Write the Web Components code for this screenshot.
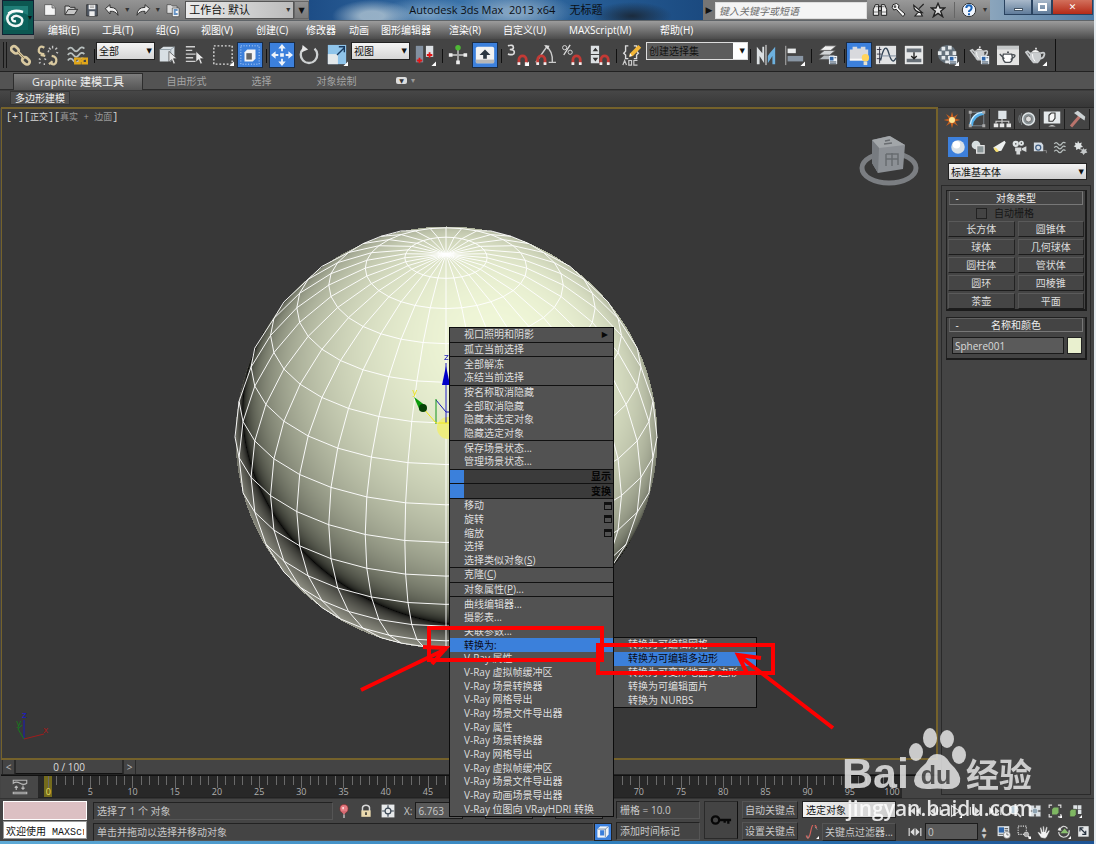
<!DOCTYPE html>
<html lang="zh-CN">
<head>
<meta charset="utf-8">
<title>Autodesk 3ds Max 2013 x64 无标题</title>
<style>
html,body{margin:0;height:100%;background:#444}
body{font:10px/14px "Open Sans","Noto Sans CJK SC",sans-serif;color:#dcdcdc;overflow:hidden}
</style>
</head>
<body>
<mx-app></mx-app>
<script>
const BASE=`*{box-sizing:border-box}button,input,select{font:inherit;color:inherit;margin:0;padding:0;border:0;background:none;border-radius:0;outline:0;min-width:0}
button{display:flex;align-items:center;justify-content:center;white-space:nowrap}a{color:inherit;text-decoration:none}select{appearance:none}`;
function define(name,css,html,ready){
  customElements.define(name,class extends HTMLElement{
    constructor(){super();this.attachShadow({mode:'open'})}
    connectedCallback(){
      const t=document.createElement('template');
      t.innerHTML=`<style>${BASE}${css}</style>`+(typeof html==='function'?html(this):html);
      this.shadowRoot.replaceChildren(t.content.cloneNode(true));
      if(ready)ready(this.shadowRoot,this);
    }
  });
}

/* icons, all on a 24 unit grid */
const magnet='<path d="M13 22v-5a4 4 0 0 1 8 0v5" fill="none" stroke="#c33a35" stroke-width="3"/><path d="M11.500 20h3v3h-3zM19.500 20h3v3h-3z" fill="#eee"/>';
const card='<path d="M13 13h9v9h-9z" fill="#eef3f8"/><path d="M14 14h4v4h-4z" fill="#2d64a8"/><path d="M19 15h2M14 19.500h7M14 21h7" stroke="#456"/>';
const pot='<path d="M6 9h11q2 8-3 12H9Q4 17 6 9z" fill="#c9ccce"/><path d="M7 9q4-5 9 0z" fill="#f2f2f2"/><path d="M11 4h2v2h-2z" fill="#ddd"/><path d="M7 17 1 9l2-1 5 5M17 10q5-2 4 2t-5 4" fill="none" stroke="#c9ccce" stroke-width="2"/><path d="M8 11q0 5 3 8" stroke="#fff" fill="none"/>';
const waves='<path d="M2 6q3-4 6 0t6 0 6-1M2 12q3-4 6 0t6 0 6-1M2 18q3-4 6 0t6 0 6-1" fill="none" stroke="#b9c0bf" stroke-width="2"/>';
const arrow='<path d="M13 8v12l3-3 2 5 2-1-2-5h4z" fill="#e8e8e8" stroke="#333" stroke-width=".7"/>';
const IC={
 logo:'<rect width="24" height="24" fill="#0d625d"/><path d="M0 0h24v9Q12 2 0 16z" fill="#2b8f87" opacity=".6"/><path d="M19 6Q9 3 5 8t1 10q6 4 11 0 3-5-1-7-5-3-8 1 0 4 4 3" fill="none" stroke="#f2f7f6" stroke-width="2.500"/><path d="M4 7q6-4 15-1" stroke="#fff" stroke-width="1.500" fill="none"/>',
 file:'<path d="M4 4h11l5 5v11H4z" fill="#f4f4f4" stroke="#444"/><path d="M15 4v5h5" fill="#bbb" stroke="#444"/>',
 open:'<path d="M3 19V6h6l2 2h7v3" fill="#ddd" stroke="#333" stroke-width="1.500"/><path d="M3 19 8 11h14l-5 8z" fill="#c8c8c8" stroke="#333" stroke-width="1.500"/>',
 save:'<path d="M4 4h16v17H4z" fill="#525a66" stroke="#222"/><path d="M7 4h10v7H7zM8 14h8v7H8z" fill="#eee"/><path d="M9 6h6M9 8h6" stroke="#888"/>',
 undo:'<path d="M2 10 9 4v4q12 0 12 12-4-7-12-6v4z" fill="#ededed" stroke="#333" stroke-width="1.500"/>',
 redo:'<path d="M22 10 15 4v4Q3 8 3 20q4-7 12-6v4z" fill="#ededed" stroke="#333" stroke-width="1.500"/>',
 project:'<path d="M3 8V4h6l2 2h7v11H3z" fill="#ddd" stroke="#444"/><path d="M11 9h10v13H11z" fill="#f8f8f8" stroke="#444"/><path d="M13 12h6M13 15h3M13 18h6" stroke="#3773b4" stroke-width="2"/>',
 bino:'<path d="M5 4h5v16H2v-9zM14 4h5l3 7v9h-8zM10 7h4v6h-4z" fill="#eee" stroke="#222" stroke-width="1.500"/><path d="M3 15h6M15 15h6M5 7h4M15 7h4" stroke="#444"/>',
 wrench:'<path d="M3 4q6-4 9 1l-1 4 10 9-3 4-10-11-4 1Q0 8 3 4z" fill="#f3f3f3" stroke="#222" stroke-width="1.500"/><circle cx="6" cy="7" r="2" fill="#555"/>',
 dish:'<path d="M4 5q0 11 13 11zM11 15l-5 6h11l-3-6M12 10l7-7" fill="#eee" stroke="#222" stroke-width="1.700"/>',
 star:'<path d="m12 2 3 7h7l-6 5 3 8-7-5-7 5 3-8-6-5h7z" fill="#ddd" stroke="#222" stroke-width="2"/>',
 help:'<circle cx="12" cy="12" r="10" fill="#f2f7ff" stroke="#333" stroke-width="1.500"/><path d="M8 9q0-4 4-4t4 4q0 2-4 5v1" fill="none" stroke="#1c62b5" stroke-width="3"/><path d="M10.500 17h3v3h-3z" fill="#1c62b5"/>',
 link:'<g fill="none" stroke="#d9c9a0" stroke-width="3"><rect x="1" y="3" width="9" height="6" rx="3" transform="rotate(42 5 6)"/><rect x="13" y="15" width="9" height="6" rx="3" transform="rotate(42 17 18)"/><path d="m8 8 8 8"/></g><path d="m8 8 8 8" stroke="#8b7a54"/>',
 unlink:'<g fill="none" stroke="#d9c9a0" stroke-width="2.500"><path d="M8 4Q3 1 2 6t6 5M15 21q5 3 6-2t-5-6M13 22l4-3M4 12l5 1"/></g><path d="m13 4 2 2m2-4v3m5-1-2 2m1 3 2 1M2 16l2 1m-2 4 2-1m4 3v-2m2-4-2-1m5-9-1 2" stroke="#c6c6c6" stroke-width="1.500"/>',
 bind:waves+'<path d="M10 16h5v5h-5zM18 16h5v5h-5zM14 18.500h5" fill="none" stroke="#e0a61a" stroke-width="2.500"/>',
 select:'<path d="M3 6l4-3h12v12l-4 4H3z" fill="#d8dfe4"/><path d="M3 6h12v13M15 6l4-3" stroke="#8f9ca5" fill="none"/>'+arrow,
 byname:'<path d="M2 3h10M2 7h7M2 11h12M2 15h8M2 19h11" stroke="#cfcfcf" stroke-width="1.500"/>'+arrow,
 marquee:'<path d="M2 2h20v20H2z" fill="none" stroke="#ddd" stroke-width="1.500" stroke-dasharray="2 2"/>',
 window:'<path d="M2 2h20v20H2z" fill="none" stroke="#d8e6ff" stroke-dasharray="1 2"/><path d="M6 9l3-3h9v10l-3 3H6z" fill="#f4f4f4"/><path d="M8 10h6v7H8z" fill="#666"/>',
 move:'<path d="M10 10h4v4h-4zM12 0l4 5h-3v3h-2V5H8zM12 24l4-5h-3v-3h-2v3H8zM0 12l5-4v3h3v2H5v3zM24 12l-5-4v3h-3v2h3v3z" fill="#eef3fa"/>',
 rotate:'<path d="M6 5a9 9 0 1 0 12 0" fill="none" stroke="#ced1d2" stroke-width="2.500"/><path d="m5 1 6 5-7 3z" fill="#e5e5e5"/>',
 scale:'<path d="M2 1h20v21H2z" fill="#8fc4ea"/><path d="M2 11h11v11H2z" fill="#e3e8ea"/><path d="m12 12 8-8m0 5V3h-6" stroke="#183a60" stroke-width="1.500" fill="none"/>',
 pivot:'<path d="M2 2h8v18H2z" fill="#8290a0"/><path d="M13 2h8v12h-8z" fill="#dde1e5"/><path d="M6 15v6M3 18h6M17 9v6M14 12h6" stroke="#e01616" stroke-width="2"/>',
 manip:'<path d="M12 4v16M4 12h16" stroke="#aaa" stroke-width="2"/><g fill="#eee"><path d="M2 10h4v4H2zM18 10h4v4h-4zM10 18h4v4h-4z"/></g><circle cx="12" cy="4" r="3" fill="#4fb836"/>',
 keys:'<rect x="2" y="3" width="20" height="18" rx="2" fill="#f2f2f2"/><path d="M2 17h20v4H2z" fill="#b7b7b7"/><path d="M12 6l6 6h-4v4h-4v-4H6z" fill="#2d3742"/>',
 snap:'<path d="M1 2q6-2 6 2 0 2-4 2 5 0 5 3 0 4-7 2" fill="none" stroke="#ddd" stroke-width="1.800"/>'+magnet,
 angle:'<path d="M2 20 14 3M13 2q8 6 7 18M16 20h8m-9-4" fill="none" stroke="#ccc" stroke-width="1.500"/><path d="m11 1 6 1-2 4z" fill="#ddd"/><g transform="translate(-9)">'+magnet+'</g>',
 percent:'<path d="m3 12 7-11" stroke="#ddd" stroke-width="1.500"/><circle cx="4" cy="4" r="2.300" fill="none" stroke="#ddd"/><circle cx="10" cy="9" r="2.300" fill="none" stroke="#ddd"/>'+magnet,
 spin:'<path d="M2 2h9v9H2zM2 12h9v9H2z" fill="#dce0e3"/><path d="m4 8 3-4 3 4zM4 15h6l-3 4z" fill="#333"/>'+magnet,
 sets:'<path d="M8 2H5v6l-2 2 2 2v4h3M14 2h3v6l2 2-2 2v4h-3" fill="none" stroke="#ddd" stroke-width="1.500"/><path d="m9 14 1-4 9-9 3 3-9 9z" fill="#f2b638"/><path d="m9 14 1-4 2 3z" fill="#fff"/><path d="m2 23 2-5 2 5m2.500-5v5h3v-5zm9.500 0h-4v5h4" stroke="#ccc" fill="none" stroke-width="1.300"/>',
 mirror:'<path d="M2 3 8 10V3h2v18L5 13v9H2z" fill="#dce0e2"/><path d="M22 3l-6 7-2 3v8l5-8v9h3z" fill="#6db1df"/><path d="M12 1v22" stroke="#fff"/>',
 align:'<path d="M3 2v21" stroke="#bbb"/><path d="M5 5h9v5H5z" fill="#e9ebec"/><path d="M5 13h17v6H5z" fill="#8996a4"/>',
 layers:'<g stroke="#555" stroke-width=".8"><path d="m2 17 6-5h12l-6 5z" fill="#b7bcc0"/><path d="m2 12 6-5h12l-6 5z" fill="#d2d5d7"/><path d="m3 7 6-5h12l-6 5z" fill="#f1f1f1"/></g>'+card,
 ribbon:'<path d="M2 6h3V3h5v2h4V3h5v3h3v12H2z" fill="#d8d9dd"/><path d="M2 16h20v2H2z" fill="#f8f8f8"/><circle cx="19" cy="15" r="4" fill="#ffd45c"/><path d="M17 19h4v4h-4z" fill="#e8e2d0"/>',
 curve:'<path d="M1 2h22v20H1z" fill="#e2e3e4"/><path d="M5 3v18M2 6h5M2 11h5M2 16h5" stroke="#334"/><path d="M6 18Q11-4 15 10t8 5" fill="none" stroke="#345" stroke-width="1.500"/><path d="M5 13h18" stroke="#789"/>',
 schem:'<path d="M2 2h20v20H2z" fill="#e7e8e8"/><path d="M4 5h16v4H4zM4 16h16v4H4z" fill="#687078"/><path d="M12 9v6m-3-2 3 3 3-3" stroke="#222" stroke-width="1.500" fill="none"/>',
 material:'<circle cx="11" cy="11" r="10" fill="#66727c"/><path d="M5 3h4v4H5zM12 2h4v4h-4zM1 8h4v4H1zM9 8h4v4H9zM17 8h4v4h-4zM5 13h4v4H5zM12 13h4v4h-4zM9 18h4v3H9z" fill="#e6eaec"/>'+card,
 setup:'<g transform="translate(1 -1) scale(.9)">'+pot+'</g>'+card,
 frame:'<path d="M0 2h24v21H0z" fill="#e4e4e3"/><path d="M0 2h24v4H0z" fill="#c4c7c8"/><path d="M7 11h9q2 7-2 9H9q-4-3-2-9zM8 16l-5-5m13 1q5-1 3 2l-4 3M11 9h2" fill="#fff" stroke="#4a4f54" stroke-width="1.500"/>',
 teapot:pot,
 create:'<path d="m12 1 2 7 6-4-4 6 7 2-7 2 4 6-6-4-2 7-2-7-6 4 4-6-7-2 7-2-4-6 6 4z" fill="#c9601f"/><circle cx="12" cy="12" r="4" fill="#ffe794"/>',
 modify:'<path d="M3 3h18v18H3z" fill="none" stroke="#8b98a3"/><path d="M4 21Q6 6 21 4" stroke="#53aee9" stroke-width="5" fill="none"/><path d="M3 20Q5 4 20 3" stroke="#d5efff" stroke-width="1.500" fill="none"/><path d="M1 19h4v4H1zM1 1h4v4H1zM19 1h4v4h-4zM19 19h4v4h-4z" fill="#aaa"/>',
 tree:'<path d="M7 1h11v11H7z" fill="#dde3e7"/><path d="M12 12v6M4 18v-3h17v3" stroke="#ccc" fill="none" stroke-width="1.500"/><path d="M1 18h6v5H1zM9 18h6v5H9zM18 18h6v5h-6z" fill="#e8e8e8"/>',
 motion:'<circle cx="14" cy="12" r="8" fill="#8b9498" stroke="#dfe5e7" stroke-width="2"/><circle cx="14" cy="12" r="4" fill="#ddd" stroke="#555"/><path d="M5 4q-4 8 0 16M2 7q-2 5 0 10" stroke="#82898c" fill="none"/>',
 display:'<path d="M1 2h22v16H1z" fill="#e6eaec"/><path d="M8 7l3-3h5v7l-3 4H8z" fill="#f7f7f7" stroke="#333" stroke-width="1.500"/><path d="M7 22q5-4 10 0z" fill="#ccc"/>',
 hammer:'<path d="M4 22 16 8" stroke="#ba746c" stroke-width="4"/><path d="m8 4 5-3 4 3 6 5-1 5-3-2-7-5z" fill="#ccd2d4"/>',
 sphere:'<circle cx="12" cy="12" r="9" fill="#d9e1e6"/><circle cx="10" cy="9" r="5" fill="#fff"/>',
 shapes:'<circle cx="8" cy="8" r="7" fill="#d6dee0"/><path d="M9 9h12v12H9z" fill="#8b9698" stroke="#e5e5e5" stroke-width="2"/>',
 lamp:'<path d="m20 1 2 3-7 13Q4 19 2 12z" fill="#edf0f0"/><path d="M3 12q4-1 8 6-6 4-8-6z" fill="#f7df70"/>',
 camera:'<circle cx="6" cy="6" r="5" fill="#dfe4e5"/><circle cx="15" cy="5" r="4" fill="#dfe4e5"/><path d="M5 12h10v6H5zM16 13l7-3v9l-7-3M7 18v5h6v-5" fill="#d6d9da"/><path d="M5 6h2m7-1h2" stroke="#333" stroke-width="2"/>',
 tape:'<path d="M3 18V4h12l3 4v10z" fill="#d4dce4"/><circle cx="10" cy="12" r="4" fill="none" stroke="#425f83" stroke-width="2"/><path d="M18 17h5v4" stroke="#aaa" fill="none"/>',
 space:waves,
 gears:'<path d="m8 1 2 4 4-1-1 4 3 3-4 1v4l-3-2-4 2v-4l-4-2 3-2-1-4 4 1z" fill="#dfe3e4"/><path d="m17 12 1 3 4-1-1 3 2 3-4 1-2 3-2-3-4-1 3-2-1-4 3 1z" fill="#c5c9ca"/>',
 trackmode:'<path d="M3 3h18v4q-4 3-9 0T3 7zM3 19h18v2H3z" fill="none" stroke="#b7b7b7" stroke-width="1.500"/><path d="M7 16v-5m-2 2 2-2 2 2M16 10v5m-2-2 2 2 2-2" stroke="#bbb" fill="none" stroke-width="1.500"/>',
 pin:'<ellipse cx="12" cy="8" rx="7" ry="7" fill="#e37b82" stroke="#822"/><path d="M7 12l5 7 5-7z" fill="#d56a72"/><path d="M12 18v6" stroke="#ddd" stroke-width="2"/><path d="M9 5h3v4H9z" fill="#ffd3d5"/>',
 lock:'<path d="M6 12V6q1-4 6-4t6 4v6" fill="none" stroke="#d8d8d8" stroke-width="2.500"/><path d="M4 11h16v11H4z" fill="#ead9ae"/><path d="M12 14v5" stroke="#222" stroke-width="2.500"/>',
 xform:'<path d="M1 1h22v22H1z" fill="#e8eaeb"/><circle cx="12" cy="12" r="5" fill="none" stroke="#3b4754" stroke-width="2"/><path d="M12 2v5M12 17v5M2 12h5M17 12h5" stroke="#3b4754" stroke-width="2"/>',
 cube:'<path d="M3 7l4-4h14v13l-4 5H3z" fill="#eef2f7" stroke="#fff"/><path d="M7 9h7v9H7z" fill="#3a7edb"/><path d="M3 7h13v14M16 7l5-4" stroke="#30506f" fill="none"/>',
 key:'<circle cx="6" cy="12" r="4" fill="none" stroke="#080808" stroke-width="2.500"/><path d="M10 12h13m-3 0v4m-4-4v3" stroke="#080808" stroke-width="2.500"/>',
 tangent:'<path d="M2 18Q6 30 10 10T20 5" fill="none" stroke="#d3625c" stroke-width="2"/><path d="M5 18v5m12-20 4 5" stroke="#b9b9b9"/>',
 first:'<path d="M2 5v14" stroke="#ddd" stroke-width="2"/><path d="m12 5-8 7 8 7zM22 5l-8 7 8 7z" fill="#ddd"/>',
 prev:'<path d="m12 5-8 7 8 7zM15 5h2v14h-2zM20 5h2v14h-2z" fill="#ddd"/>',
 play:'<path d="m6 3 14 9-14 9z" fill="none" stroke="#ddd" stroke-width="2"/>',
 next:'<path d="m12 5 8 7-8 7zM3 5h2v14H3zM8 5h2v14H8z" fill="#ddd"/>',
 last:'<path d="M22 5v14" stroke="#ddd" stroke-width="2"/><path d="m12 5 8 7-8 7zM2 5l8 7-8 7z" fill="#ddd"/>',
 keymode:'<path d="M2 5v14M22 5v14" stroke="#ddd" stroke-width="2"/><path d="m11 5-7 7 7 7zM13 5l7 7-7 7z" fill="#ddd"/>',
 zoomi:'<circle cx="10" cy="10" r="7" fill="#b9cbd6" stroke="#eee" stroke-width="2"/><path d="m15 15 7 7" stroke="#ddd" stroke-width="3"/>',
 quad:'<path d="M2 2h9v9H2zM13 2h9v9h-9zM2 13h9v9H2zM13 13h9v9h-9z" fill="#dbe0e4" stroke="#555"/><circle cx="12" cy="12" r="5" fill="#90a5b4" stroke="#fff"/>',
 extent:'<path d="M2 7V2h5M17 2h5v5M22 17v5h-5M7 22H2v-5" stroke="#ddd" fill="none" stroke-width="2"/><path d="M7 9l3-3h8v9l-3 3H7z" fill="#7fb763"/>',
 extall:'<path d="M9 2h7v7H9zM17 2h6v7h-6zM17 10h6v7h-6z" fill="#dde2e5"/><path d="M3 12l3-3h8v9l-3 4H3z" fill="#7fb763" stroke="#333"/>',
 timecfg:'<path d="M1 2h20v17H1z" fill="#dfe5e9"/><path d="M3 4h9v9H3z" fill="#2d64a8"/><path d="M13 6h6M13 9h6M3 16h8" stroke="#555" stroke-width="1.500"/><circle cx="17" cy="17" r="6" fill="#f5f5f5" stroke="#555"/><path d="M17 13v4h3" stroke="#222" fill="none"/>',
 region:'<path d="M2 2h14v14H2z" fill="none" stroke="#ddd" stroke-width="2" stroke-dasharray="2 2"/><circle cx="16" cy="16" r="4" fill="#aaa" stroke="#eee"/><path d="m19 19 4 4" stroke="#eee" stroke-width="3"/>',
 hand:'<path d="M7 22 1 13l2-1 4 3L5 5l2-1 3 8V2h2l1 10 3-9 2 1-2 10 4-5 2 1-5 10-3 3z" fill="#f3f3f3" stroke="#555" stroke-width=".7"/>',
 orbit:'<path d="M4 9Q10-3 18 6M21 9q0 12-10 12-8-2-8-9" fill="none" stroke="#ddd" stroke-width="2"/><path d="M6 14h14l-7-8z" fill="#8abf70"/><path d="m1 9 7 1-4-6z" fill="#eee"/>',
 maxvp:'<path d="M2 2h18v18H2z" fill="#e6e8e9"/><path d="m6 6 9 9m0-5v6H9M5 11V5h6" stroke="#2a3440" stroke-width="2" fill="none"/>'
};
define('mx-icon',':host{display:inline-block;width:22px;height:22px;flex:none}svg{display:block;width:100%;height:100%}',
 e=>`<svg viewBox="0 0 24 24" aria-hidden="true">${IC[e.getAttribute('name')]}${e.hasAttribute('fly')?'<path d="M24 19v5h-5z" fill="#fff"/>':''}</svg>`);

define('mx-titlebar',`:host{display:flex;height:21px;flex:none;background:#1c4c84;border-bottom:1px solid #5f6468}
.q{display:flex;align-items:center;width:275px;padding:0 0 0 6px;background:linear-gradient(#949494,#777);flex:none}
.q button{width:21px}.q mx-icon,.r mx-icon{width:16px;height:16px}.q i,.r i{width:10px;font:8px/12px "DejaVu Sans";color:#333;text-align:center}
select{width:109px;height:18px;margin-left:2px;padding:0 3px;font-size:11px;background:linear-gradient(90deg,#ebebeb,#bbb);color:#111;border:1px solid #555}
.pick{display:flex;align-items:center;position:relative}.pick i{position:absolute;right:1px}
.q .more{width:15px;height:18px;color:#111;font:8px "DejaVu Sans";border:1px solid #666}
h1{flex:1;min-width:0;margin:0;font-size:11px;line-height:20px;font-weight:400;color:#0b0f14;text-align:center;white-space:pre;
background:radial-gradient(40px 16px at 16% 80%,#b0c4d2cc 30%,#0000),radial-gradient(60px 20px at 52% 60%,#8dabc6dd 20%,#0000),radial-gradient(50px 16px at 30% 70%,#8fb2cfcc,#0000),radial-gradient(40px 14px at 82% 80%,#1b2b3d,#0000),linear-gradient(90deg,#1d4d86,#3a73aa 40%,#245a92 75%,#1b4a80)}
.s{display:flex;width:164px;flex:none;background:#757575;color:#111}.s button{width:12px;font:9px "DejaVu Sans"}
input{flex:1;height:17px;margin-top:2px;padding:0 3px;background:#f4f4f4;border:1px solid #ddd;font-style:italic;color:#555}input::placeholder{color:#6d6d6d;opacity:1}
.r{display:flex;align-items:center;width:123px;padding-left:3px;background:linear-gradient(#999,#777);flex:none}.r button{width:20px}.r b{width:1px;height:16px;background:#666;margin:0 4px 0 6px}.r i{margin-left:2px}
.w{display:flex;width:104px;padding-left:14px;background:linear-gradient(90deg,#8ba5bc,#4f7ba5);flex:none;align-items:flex-start}
.w button{height:15px;width:28px;border:1px solid #29425f;border-top:0;background:linear-gradient(#a9b9ca,#5f7b9a);color:#fff;font:bold 9px "DejaVu Sans";flex:none}
.w button:nth-child(2){width:20px}.w button:last-child{width:41px;background:linear-gradient(#d2705c,#b52a17)}.w span{width:9px;height:3px;background:#fff;border:1px solid #456;margin-top:4px}.w em{width:9px;height:8px;border:2px solid #fff}`,
`<div class="q"><button aria-label="新建"><mx-icon name="file"></mx-icon></button><button aria-label="打开"><mx-icon name="open"></mx-icon></button><button aria-label="保存"><mx-icon name="save"></mx-icon></button><button aria-label="撤消"><mx-icon name="undo"></mx-icon></button><i>▾</i><button aria-label="重做"><mx-icon name="redo"></mx-icon></button><i>▾</i><button aria-label="项目文件夹"><mx-icon name="project"></mx-icon></button><label class="pick"><select aria-label="工作台"><option>工作台: 默认</option></select><i>▾</i></label><button class="more" aria-label="更多">▼</button></div>
<h1>Autodesk 3ds Max  2013 x64     无标题</h1>
<div class="s"><button aria-label="展开">▶</button><input aria-label="搜索" placeholder="键入关键字或短语"></div>
<div class="r"><button aria-label="查找"><mx-icon name="bino"></mx-icon></button><button aria-label="工具"><mx-icon name="wrench"></mx-icon></button><button aria-label="通信"><mx-icon name="dish"></mx-icon></button><button aria-label="收藏"><mx-icon name="star"></mx-icon></button><b></b><button aria-label="帮助"><mx-icon name="help"></mx-icon></button><i>▾</i></div>
<div class="w"><button aria-label="最小化"><span></span></button><button aria-label="还原"><em></em></button><button aria-label="关闭">✕</button></div>`);

const MENUS=['编辑(E)','工具(T)','组(G)','视图(V)','创建(C)','修改器','动画','图形编辑器','渲染(R)','自定义(U)','MAXScript(M)','帮助(H)'];
define('mx-menubar',`:host{display:block;height:18px;flex:none;background:linear-gradient(#9c9c9c,#4b4b4b)}
nav{display:grid;grid-template-columns:54px 54px 45px 55px 50px 43px 32px 68px 54px 66px 91px auto;padding-left:14px;line-height:18px;color:#fff;white-space:nowrap}`,
`<nav>${MENUS.map(m=>`<a href="#">${m}</a>`).join('')}</nav>`);

define('mx-head',`:host{display:flex;flex:none;padding-left:2px;background:#777}.l{display:flex;align-items:center;width:32px;height:35px;padding:0;background:#0c5751;border:1px solid #123}.l mx-icon{width:24px;height:28px}.l span{font:8px "DejaVu Sans";color:#111}div{flex:1;min-width:0}`,
`<button class="l" aria-label="应用程序菜单"><mx-icon name="logo"></mx-icon><span>▾</span></button><div><mx-titlebar></mx-titlebar><mx-menubar></mx-menubar></div>`);

const B=(n,w,l,f)=>`<button class="w${w}${l?' lit':''}" aria-label="${n}"><mx-icon name="${n}"${f?' fly':''}></mx-icon></button>`;
const S=w=>`<i class="s${w}"></i>`;
const C=(t,c)=>`<label class="c ${c||''}"><select aria-label="${t}"><option>${t}</option></select><b>▼</b></label>`;
define('mx-toolbar',`:host{display:flex;height:33px;flex:none;background:#444;border-bottom:1px solid #222;overflow:hidden}
.g{width:8px;margin:3px 0;flex:none;background:linear-gradient(90deg,#444 3px,#181818 3px,#181818 4px,#444 4px,#444 6px,#181818 6px,#181818 7px,#444 7px)}
button{height:26px;margin-top:3px;flex:none}.w26{width:26px}.w28{width:28px}.w30{width:30px}.lit{background:#3c80dc;border:1px solid #1b2c44}
i{flex:none;height:14px;margin-top:10px;background:linear-gradient(#111,#111) center/1px no-repeat}.s4{width:4px}.s6{width:6px}
.c{display:flex;position:relative;width:59px;height:18px;margin-top:3px;flex:none;color:#111}.c select{width:100%;padding:0 2px;border:1px solid #222;background:linear-gradient(#f4f4f4,#d6d6d6)}.c b{position:absolute;right:3px;top:3px;font:7px/12px "DejaVu Sans"}
.n{width:102px}.n select{background:linear-gradient(90deg,#5c5c5c 86px,#fff 86px);border-color:#ddd}
.e{width:1px;background:#111;margin-left:5px}`,
`<div class="g"></div>`+B('link',26)+B('unlink',28)+B('bind',30)+S(4)+C('全部')+B('select',26)+B('byname',28)+B('marquee',28,0,1)+B('window',26,1)+S(6)+B('move',26,1)+B('rotate',28)+B('scale',28,0,1)+C('视图')+B('pivot',30,0,1)+S(4)+B('manip',28)+B('keys',26,1)+S(6)+B('snap',28,0,1)+B('angle',26)+B('percent',28)+B('spin',28)+S(4)+B('sets',28)+C('创建选择集','n')+S(4)+B('mirror',28)+B('align',28,0,1)+S(6)+B('layers',28)+S(4)+B('ribbon',26,1)+B('curve',28)+B('schem',28)+S(6)+B('material',28,0,1)+S(4)+B('setup',28)+B('frame',28)+B('teapot',28,0,1)+'<div class="e"></div>');

define('mx-ribbon',`:host{display:block;flex:none;height:35px;background:#3c3c3c}
nav{display:flex;height:18px;padding-left:13px;background:#535353;border-bottom:1px solid #2b2b2b;color:#a5a5a5;line-height:18px}
nav a{width:76px;text-align:center;font-size:10px}nav a:first-child{width:130px;height:17px;margin-top:1px;line-height:16px;background:linear-gradient(#7d7d7d,#555);color:#eee;font-size:11px;border:1px solid #2d2d2d;border-width:1px 1px 0}
nav a.b{width:75px}nav button{margin-left:22px;color:#999;font:8px "DejaVu Sans"}nav button i{width:11px;height:7px;border-radius:2px;background:#ddd;margin-right:4px;color:#333;font:6px/7px "DejaVu Sans"}
div{padding-left:10px;height:17px;background:linear-gradient(#474747,#363636)}div button{height:14px;margin-top:1px;padding:0 4px;background:#4e4e4e;border:1px solid #343434;color:#eee;line-height:12px}`,
`<nav><a href="#">Graphite 建模工具</a><a class="b" href="#" style="margin-left:6px">自由形式</a><a class="b" href="#">选择</a><a class="b" href="#">对象绘制</a><button aria-label="显示"><i>▼</i>▾</button></nav><div><button>多边形建模</button></div>`);

/* sphere of 32 segments seen from 30 degrees above, lit from the upper right with a weaker back light */
function drawSphere(cv){
  const R=211,cx=212,cy=212,g=cv.getContext('2d'),im=g.createImageData(424,424),L=[.26,.455,.851];
  for(let y=0;y<424;y++)for(let x=0;x<424;x++){
    const a=(x-cx)/R,b=(cy-y)/R,q=1-a*a-b*b;if(q<0)continue;
    const d=a*L[0]+b*L[1]+Math.sqrt(q)*L[2],s=d>0?Math.pow(d,.48):.95*Math.pow(-d,.42),i=(y*424+x)*4;
    const c=d>0?[240,247,216]:[224,225,206];
    im.data[i]=c[0]*s;im.data[i+1]=c[1]*s;im.data[i+2]=c[2]*s;im.data[i+3]=255;
  }
  g.putImageData(im,0,0);
  const E=Math.PI/6,P=(la,lo)=>{const x=Math.cos(la)*Math.sin(lo),z=Math.cos(la)*Math.cos(lo),y=Math.sin(la);
    return [cx+R*x,cy-R*(y*Math.cos(E)-z*Math.sin(E)),y*Math.sin(E)+z*Math.cos(E)]};
  const U=Math.PI/16;g.strokeStyle='#fffffff0';g.lineWidth=1;g.beginPath();
  const seg=(p,q)=>{if(p[2]>-.03&&q[2]>-.03){g.moveTo(p[0],p[1]);g.lineTo(q[0],q[1])}};
  for(let i=-8;i<8;i++)for(let j=0;j<32;j++){seg(P(i*U,j*U),P(i*U+U,j*U));seg(P(i*U,j*U),P(i*U,j*U+U))}
  g.stroke();
}
define('mx-viewport',`:host{display:block;position:relative;flex:1;min-height:0;background:#383838;border:2px solid #75622b;border-width:2px 2px 2px 1px;overflow:hidden}
.lab{position:absolute;left:4px;top:3px;font:10px/12px "Liberation Mono","Noto Sans CJK SC",monospace;color:#d5d5d5;white-space:pre}.lab span{font-size:9px}.lab .d{color:#999}
canvas{position:absolute;left:232px;top:116px}svg{position:absolute}.giz{left:405px;top:241px}.cube{right:15px;top:26px}.ax{left:9px;bottom:14px}text{font:9px "DejaVu Sans",sans-serif}`,
`<div class="lab">[+][<span>正交</span>][<span class="d">真实 + 边面</span>]</div><canvas width="424" height="424" role="img" aria-label="Sphere001"></canvas>
<svg class="giz" width="60" height="100" viewBox="407 350 60 100"><circle cx="448" cy="428" r="11" fill="#eded7f"/><path d="M446 363v60M436 400l10 12h3" stroke="#1a1ab4" fill="none"/><path d="M446 366l4 19h-8z" fill="#0000c8"/><path d="M436 399v25" stroke="#12951c"/><path d="M449 423h-13l-13-15" stroke="#f0e818" fill="none"/><path d="M414 397l12 9-6 5z" fill="#0a9a0a"/><circle cx="423" cy="408" r="4" fill="#063f06"/><text x="444" y="360" fill="#1a1ab4">z</text><text x="412" y="395" fill="#e8e020">y</text></svg>
<svg class="cube" width="64" height="56" viewBox="0 0 64 56"><ellipse cx="32" cy="33" rx="27" ry="15" fill="none" stroke="#7b7e82" stroke-width="5"/><path d="M15 5 32 1l16 9-2 24-25 4-6-10z" fill="#8c9095"/><path d="m15 5 7 8 26-3-15-9z" fill="#a2a6a9"/><path d="m15 5 7 8-1 25-6-10z" fill="#777b80"/><path d="m28 6 5-1m-6 4 8-1M29 19h12v11M29 19v12m6-13v13m-6-7h12" stroke="#686c70" stroke-width="1.500" fill="none"/></svg>
<svg class="ax" width="44" height="34" viewBox="11 708 44 34"><path d="M24 718v19" stroke="#1919bb"/><path d="m24 737-6-10 4-4" stroke="#177a1c" fill="none"/><path d="m24 737 20-5" stroke="#a01c1c"/><text x="22" y="716" fill="#1919cc">z</text><text x="16" y="724" fill="#177a1c">y</text><text x="43" y="731" fill="#a01c1c">x</text></svg>`,
r=>drawSphere(r.querySelector('canvas')));

define('mx-rollout',`:host{display:block;border:1px solid #202020;border-right:2px solid #1b1b1b;border-bottom:2px solid #1b1b1b;padding:0 1px}
h2{display:grid;grid-template-columns:14px 1fr 14px;margin:0 1px;height:14px;border:1px solid #6f6f6f;border-color:#606060 #777 #777 #606060;background:#444;font-size:10px;line-height:12px;font-weight:400;text-align:center;color:#eee}`,
e=>`<h2><span>-</span><span>${e.getAttribute('head')}</span></h2><slot></slot>`);
define('mx-panel',`:host{display:flex;flex-direction:column;width:156px;flex:none;background:#444}
.t{display:flex;height:24px;padding:1px 2px;border-top:1px solid #2a2a2a}.t button{width:25px;border-right:1px solid #1d1d1d;border-bottom:1px solid #252525}.t button:first-child{border-bottom:0}.t mx-icon{width:18px;height:18px}
.k{display:flex;margin:6px 3px 6px 10px}.k button{flex:1;height:20px}.k .lit{background:#3d80dc}.k mx-icon{width:15px;height:15px}.k .lit mx-icon{width:18px;height:18px}
.c{position:relative;display:flex;margin:0 7px 5px 10px;color:#111}.c select{width:100%;height:17px;background:linear-gradient(#f4f4f4,#d0d0d0);padding:0 2px;border:1px solid #222}.c b{position:absolute;right:3px;top:3px;font:7px/12px "DejaVu Sans"}
.p{flex:1;display:flex;flex-direction:column;gap:6px;margin:0 3px 3px 3px;padding-top:4px;border:1px solid #2a2a2a}
.a{display:flex;justify-content:center;align-items:center;gap:7px;height:16px;padding-right:22px;color:#161616}.a input{appearance:none;width:11px;height:11px;border:1px solid #222;background:#444}
.g{display:grid;grid-template-columns:1fr 1fr;gap:2px 3px}.g button{height:16px;background:#454545;border:1px solid #5c5c5c;border-color:#5a5a5a #222 #1c1c1c #555;line-height:14px}
.n{display:flex;gap:3px;height:26px;padding:5px 2px 4px 4px;align-items:center}.n input{flex:1;height:17px;background:#5a5a5a;border:1px solid #1a1a1a;padding:0 2px}.n button{width:15px;height:17px;background:#e9f0cf;border:1px solid #222}
mx-rollout{margin:0 3px 0 4px}`,
`<div class="t">${['create','modify','tree','motion','display','hammer'].map(n=>`<button aria-label="${n}"><mx-icon name="${n}"></mx-icon></button>`).join('')}</div>
<div class="k">${['sphere','shapes','lamp','camera','tape','space','gears'].map((n,i)=>`<button aria-label="${n}"${i?'':' class="lit"'}><mx-icon name="${n}"></mx-icon></button>`).join('')}</div>
<label class="c"><select aria-label="类别"><option>标准基本体</option></select><b>▼</b></label>
<div class="p"><mx-rollout head="对象类型"><label class="a"><input type="checkbox">自动栅格</label><div class="g">${['长方体','圆锥体','球体','几何球体','圆柱体','管状体','圆环','四棱锥','茶壶','平面'].map(t=>`<button>${t}</button>`).join('')}</div></mx-rollout>
<mx-rollout head="名称和颜色"><div class="n"><input aria-label="名称" value="Sphere001"><button aria-label="颜色"></button></div></mx-rollout></div>`);

/* frames 50 to 65 carry no number: the quad menu lies over them */
define('mx-timeline',`:host{display:block;flex:none;background:#444}
.s{display:flex;height:15px;border-bottom:1px solid #222;padding-left:1px}.s button{width:13px;border:1px solid #2a2a2a;border-width:0 1px;color:#bbb;line-height:14px}.s .b{width:108px;color:#ddd;border-bottom:1px solid #111}
.t{display:flex;height:23px;border-top:1px solid #111}.m{width:37px;flex:none;background:#474747}.m mx-icon{width:18px;height:18px}
.k{display:flex;flex:1;background:#282828;padding:0 6px;margin-right:36px;border-bottom:1px solid #222}.k span{position:relative;flex:1;min-width:0;display:flex;justify-content:center;font-size:9px;line-height:10px;padding-top:11px;color:#b0b0b0;background:linear-gradient(#6a6a6a,#6a6a6a) 4px 0/1px 9px no-repeat}
.k span.j{background-size:1px 12px}.k span:first-child{background-color:#746b1c;color:#e9df5e}`,
()=>`<div class="s"><button aria-label="上一帧">&lt;</button><button class="b">0 / 100</button><button aria-label="下一帧">&gt;</button></div><div class="t"><button class="m" aria-label="轨迹"><mx-icon name="trackmode"></mx-icon></button><div class="k">${Array.from({length:101},(_,i)=>i%5?'<span></span>':`<span class="j">${i>45&&i<70?'':i}</span>`).join('')}</div></div>`);

const I=(n,f)=>`<button class="i" aria-label="${n}"><mx-icon name="${n}"${f?' fly':''}></mx-icon></button>`;
define('mx-status',`:host{display:flex;flex:none;height:43px;padding:2px 0 0 3px;background:#444;color:#c8c8c8;border-top:1px solid #333}
.x{width:84px;flex:none;display:flex;flex-direction:column;gap:1px}.x div{height:19px;background:#dcc0c3;border:1px solid #fff}.x input{height:18px;width:100%;background:#fff;border:1px solid #999;color:#111;font:10px "Liberation Mono","Noto Sans CJK SC",monospace;padding:0 2px}
.col{display:grid;grid-template-rows:19px 19px;row-gap:2px;align-content:start;flex:none}.p{flex:1;min-width:0;margin-left:6px}.r{display:flex;align-items:center;min-width:0}
.f{height:18px;line-height:17px;border:1px solid;border-color:#222 #555 #555 #222;padding:0 3px;white-space:nowrap;overflow:hidden}.r .f{flex:1}
.i{width:22px;height:18px;flex:none}.i mx-icon{width:14px;height:14px}.r>input{width:48px;height:17px;background:#595959;border:1px solid #1b1b1b;padding:0 2px;flex:none}
.xyz{flex:none;width:279px}.xyz label{margin:0 3px 0 5px}.xyz input+input{margin-left:22px}.lit{width:18px;height:18px;background:#3c80dc;border:1px solid #222;flex:none}.lit mx-icon{width:14px;height:14px}
.g{width:84px;margin-left:4px}.key{width:34px;height:38px;margin:0 4px 0 4px;border:1px solid #2a2a2a;border-right-color:#111;flex:none}
.au{width:56px}.au button,.fl{height:18px;border:1px solid #333;border-color:#555 #262626 #222 #555}.se{width:94px;margin-left:4px;position:relative}.se select{height:17px;background:linear-gradient(90deg,#f2f2f2,#ccc);color:#111;width:94px;padding:0 3px;border:1px solid #222}.fl{flex:1}
.nav{width:198px;padding-left:9px}.nav .i{width:20px;height:18px}.nav .r>input{width:53px}.sp{width:12px;font:6px/7px "DejaVu Sans";color:#ccc;flex-direction:column;display:flex;align-items:center}.nav .r+.r .i{width:20px}.nav .r .sp+.i{margin-left:4px}.se .i{width:20px}`,
`<div class="x"><div></div><input aria-label="MAXScript 侦听器" value="欢迎使用 MAXScript"></div>
<div class="col p"><div class="r"><div class="f">选择了 1 个 对象</div><div class="r xyz">${I('pin')+I('lock')+I('xform')}<label for="x">X:</label><input id="x" value="6.763"><input aria-label="Y"><input aria-label="Z"></div></div>
<div class="r"><div class="f">单击并拖动以选择并移动对象</div><button class="lit" aria-label="自适应降级"><mx-icon name="cube"></mx-icon></button></div></div>
<div class="col g"><div class="f">栅格 = 10.0</div><div class="f">添加时间标记</div></div>
<button class="key" aria-label="设置关键点"><mx-icon name="key"></mx-icon></button>
<div class="col au"><button>自动关键点</button><button>设置关键点</button></div>
<div class="col se"><select aria-label="关键点选择"><option>选定对象</option></select><div class="r">${I('tangent',1)}<button class="fl">关键点过滤器...</button></div></div>
<div class="col nav"><div class="r">${I('first')+I('prev')+I('play',1)+I('next')+I('last')}${I('zoomi')+I('quad')+I('extent',1)+I('extall',1)}</div><div class="r">${I('keymode')}<input aria-label="当前帧" value="0"><span class="sp"><i>▲</i><i>▼</i></span>${I('timecfg')+I('region',1)+I('hand')+I('orbit',1)+I('maxvp')}</div></div>`);

define('mx-menu',`:host{display:flex;flex-direction:column;background:#525252;border:1px solid #0c0c0c;color:#dedede}
::slotted(hr){width:100%;height:1px;margin:0;border:0;background:#111;flex:none}`,'<slot></slot>');
define('mx-item',`:host{display:flex;flex:1;min-height:0}button{flex:1;justify-content:flex-start;padding:0 1px 0 14px;line-height:13px}span{flex:1;text-align:left}
:host([on]) button{background:#3b80db;color:#0a0a14}:host([head]) button{background:linear-gradient(90deg,#3b80db 14px,#3b3b3b 14px);color:#050505;font-weight:700;padding-right:2px}:host([head]) span{text-align:right}
b{font:8px/10px "DejaVu Sans";color:#080808;padding-right:4px}i{width:8px;height:8px;border:1px solid #111;border-top-width:3px}`,
e=>`<button><span><slot></slot></span>${e.hasAttribute('sub')?'<b>▶</b>':''}${e.hasAttribute('box')?'<i></i>':''}</button>`);

define('mx-marks',':host{position:absolute;left:350px;top:615px;pointer-events:none}svg{display:block}',
`<svg width="500" height="125" viewBox="350 615 500 125" fill="none" stroke="#fe0000" stroke-width="4"><path d="M429 628h173v32H429zM598 645h175v28H598z"/><path d="M361 690 446 649M423 647l23 1-14 16M833 728 738 655M761 658l-23-3 9 18"/></svg>`);
define('mx-watermark',`:host{position:absolute;right:55px;bottom:20px;width:198px;height:100px;color:#e4e4e4;opacity:.85;pointer-events:none}
.t{display:flex;position:absolute;left:1px;top:27px;line-height:44px;font-family:"Liberation Sans","Noto Sans CJK SC",sans-serif;font-weight:700}.a{font-size:43px;width:66px}.b{font-size:25px;width:56px;text-align:center;color:#555;line-height:48px}.c{font-size:33px;padding-left:2px;font-family:"Noto Sans CJK SC",sans-serif;font-weight:700;white-space:nowrap}
.u{position:absolute;left:6px;top:70px;font:600 21px/28px "Open Sans",sans-serif;color:#fff}svg{position:absolute;left:67px;top:0}`,
`<svg width="60" height="66" viewBox="0 0 60 66" fill="#e4e4e4"><ellipse cx="8" cy="28" rx="7" ry="9"/><ellipse cx="22" cy="14" rx="7" ry="10"/><ellipse cx="39" cy="15" rx="7" ry="9"/><ellipse cx="51" cy="31" rx="7" ry="9"/><path d="M29 30q8 0 13 9 12 11 10 19-2 8-15 7-8-1-15 0-15 1-16-8 0-8 12-18 4-9 11-9z"/></svg>
<div class="t"><span class="a">Bai</span><span class="b">du</span><span class="c">经验</span></div><div class="u">jingyan.baidu.com</div>`);

const ROWS=['>视口照明和阴影','-','孤立当前选择','-','全部解冻','冻结当前选择','-','按名称取消隐藏','全部取消隐藏','隐藏未选定对象','隐藏选定对象','-','保存场景状态...','管理场景状态...','-','#显示','-','#变换','-','@移动','@旋转','@缩放','选择','选择类似对象(<u>S</u>)','-','克隆(<u>C</u>)','-','对象属性(<u>P</u>)...','-','曲线编辑器...','摄影表...','关联参数...','*转换为:','V-Ray 属性','V-Ray 虚拟帧缓冲区','V-Ray 场景转换器','V-Ray 网格导出','V-Ray 场景文件导出器','V-Ray 属性','V-Ray 场景转换器','V-Ray 网格导出','V-Ray 虚拟帧缓冲区','V-Ray 场景文件导出器','V-Ray 动画场景导出器','V-Ray 位图向 VRayHDRI 转换'];
const SUB=['转换为可编辑网格','*转换为可编辑多边形','转换为可变形地面多边形','转换为可编辑面片','转换为 NURBS'];
const FLAG={'>':'sub','#':'head','@':'box','*':'on'};
const row=t=>t==='-'?'<hr>':FLAG[t[0]]?`<mx-item ${FLAG[t[0]]}>${t.slice(1)}</mx-item>`:`<mx-item>${t}</mx-item>`;
define('mx-app',`:host{display:flex;flex-direction:column;position:relative;height:100vh;overflow:hidden;background:#444;border:solid #e6edf2;border-width:0 2px 0 0}
main{display:flex;flex:1;min-height:0;padding-left:1px}.v{display:flex;flex-direction:column;flex:1;min-width:0}
footer{height:3px;flex:none;background:linear-gradient(90deg,#5eaad6,#2d7cba 60%,#1d5394)}
mx-menu{position:absolute}.m{left:449px;top:327px;width:165px;height:490px}.s{left:613px;top:637px;width:144px;height:71px}`,
`<mx-head></mx-head><mx-toolbar></mx-toolbar><mx-ribbon></mx-ribbon><main><div class="v"><mx-viewport></mx-viewport><mx-timeline></mx-timeline></div><mx-panel></mx-panel></main><mx-status></mx-status><footer></footer>
<mx-menu class="m">${ROWS.map(row).join('')}</mx-menu><mx-menu class="s">${SUB.map(row).join('')}</mx-menu><mx-marks></mx-marks><mx-watermark></mx-watermark>`);
</script>
</body>
</html>
